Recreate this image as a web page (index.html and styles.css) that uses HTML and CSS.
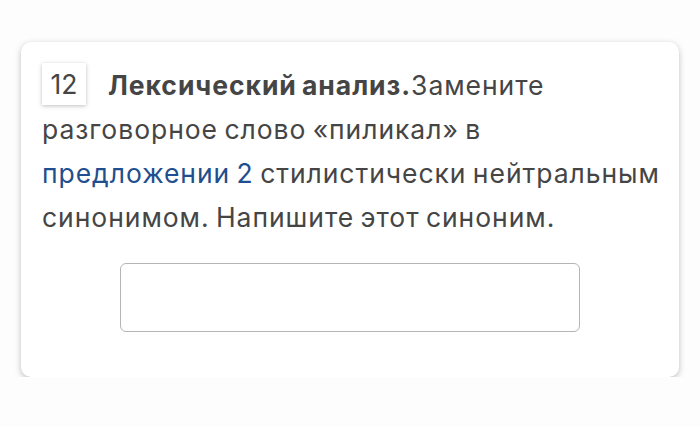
FILE: index.html
```html
<!DOCTYPE html>
<html lang="ru">
<head>
    <meta charset="UTF-8">
    <meta name="viewport" content="width=device-width, initial-scale=1.0">
    <title>Задание 12</title>
    <link rel="stylesheet" href="styles.css">
</head>
<body>

    <!-- Task card -->
    <div class="task-card">
        <div class="task-text">
            <span class="task-num">12</span>
            <b class="task-title">Лексический анализ.</b>Замените разговорное слово «пиликал» в<br>
            <a href="#" class="task-link">предложении 2</a> стилистически нейтральным<br>
            синонимом. Напишите этот синоним.
        </div>
        <input type="text" class="task-answer">
    </div>

</body>
</html>
```

FILE: styles.css
```css
body {
    margin: 0;
    background-color: #fdfdfd;
    font-family: Inter, "Noto Sans", sans-serif;
    color: #454545;
}
.task-card {
    margin: 42px 21px 0 21px;
    padding: 21px 21px 45px 21px;
    background-color: #fff;
    border-radius: 10px;
    box-shadow: 0 2px 6px rgba(0, 0, 0, 0.25);
}
.task-text {
    margin-right: -16px;
    font-size: 26.5px;
    line-height: 44px;
    letter-spacing: 0.95px;
    word-spacing: -2px;
}
.task-num {
    float: left;
    width: 44px;
    height: 42px;
    margin-right: 22px;
    text-align: center;
    line-height: 42px;
    letter-spacing: 0;
    word-spacing: 0;
    background-color: #fff;
    box-shadow: 0 1px 4px rgba(0, 0, 0, 0.25);
}
.task-title {
    font-weight: bold;
}
.task-link {
    color: #1f4f8e;
    text-decoration: none;
}
.task-answer {
    display: block;
    box-sizing: border-box;
    width: 460px;
    height: 69px;
    margin: 24px auto 0 auto;
    border: 1.5px solid #b5b5b5;
    border-radius: 6px;
    background-color: #fff;
}
```
